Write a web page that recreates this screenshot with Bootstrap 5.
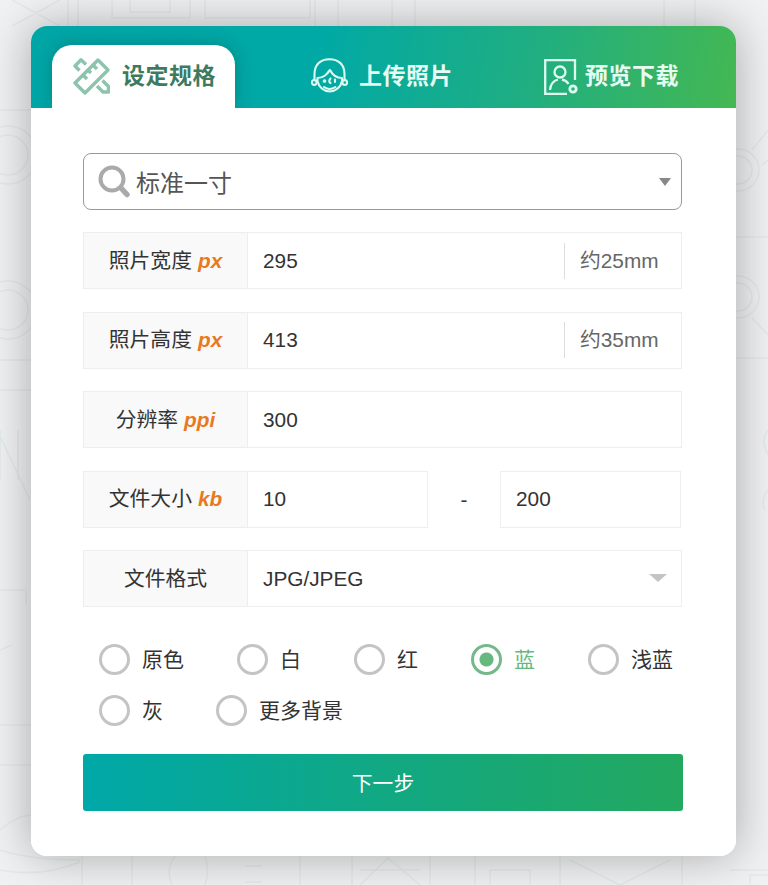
<!DOCTYPE html>
<html lang="zh-CN">
<head>
<meta charset="utf-8">
<title>设定规格</title>
<link rel="stylesheet" href="https://cdn.jsdelivr.net/npm/bootstrap@5.3.0/dist/css/bootstrap.min.css">
<style>
html,body{height:885px;overflow:hidden}
body{background:#f0f1f2;font-family:"Liberation Sans","Noto Sans CJK SC",sans-serif;color:#333;position:relative;padding:26px 32px 0 31px}
.deco{position:absolute;left:0;top:0;width:768px;height:885px}
.deco *{fill:none;stroke:#e4e9e9;stroke-width:1.6}
.sheet{position:relative;width:705px;height:830px;border:0;border-radius:16px;overflow:hidden;background:#fff}
.sheet-wrap{position:relative;width:705px;height:830px;border-radius:16px;box-shadow:0 0 45px rgba(0,0,0,.3)}
.tabbar{height:82px;padding-left:21px;background:linear-gradient(100deg,#00a6a6 0%,#00a9a6 40%,#1fae82 70%,#44b852 100%);flex-wrap:nowrap}
.tabitem{display:flex;align-items:center;color:#fff;font-size:23px;letter-spacing:.5px;font-weight:700;height:63px;line-height:1;padding:0;white-space:nowrap}
.tabitem:hover,.tabitem:focus{color:#fff}
.tabitem.on{width:183px;padding-left:21px;background:#fff;color:#3e7a5e;border-radius:20px 20px 0 0;box-shadow:0 0 18px rgba(0,60,60,.3);gap:12px}
.tab2{margin-left:76px;gap:11px;color:#e6fbf2}
.tab3{margin-left:91px;gap:7px;color:#e6fbf2}
.tabitem.on:hover,.tabitem.on:focus{color:#3e7a5e}
.formbox{position:relative;background:#fff;padding:45px 53px 45px 52px}
.stack{display:flex;flex-direction:column;gap:22.5px;margin-right:1px}
.pickwrap{position:relative}
.pickmain{height:57px;margin-bottom:-.5px;border:1px solid #999;border-radius:8px;padding:4px 40px 0 52px;font-size:24px;color:#555;background-image:none;box-shadow:none}
.lens{position:absolute;left:15px;top:12px;width:32px;height:33px;pointer-events:none}
.tri{position:absolute;border-style:solid;border-color:#888 transparent transparent;pointer-events:none}
.tri-a{right:11px;top:25px;border-width:8px 6px 0}
.tri-b{right:15px;top:24px;border-width:8px 9px 0;border-top-color:#c4c4c4}
.fld{height:57px;flex-wrap:nowrap}
.fld .input-group-text,.fld .form-control,.fld .form-select{border-color:#eee;border-radius:0;font-size:20.8px;height:57px;color:#333;box-shadow:none}
.fld .cap{width:165px;flex:none;justify-content:center;background:#f9f9f9;padding:0;gap:0}
.fld .form-control,.fld .form-select{padding:0 15px}
.fld .form-select{background-image:none}
.fld .unit{font-weight:700;font-style:italic;color:#e87a1e;margin-left:6px}
.fld .openend{border-right:0}
.fld .tail{position:relative;z-index:6;background:#fff;padding:0 22px 0 0;color:#666;width:118px;flex:none;border-left:0}
.tailin{display:flex;align-items:center;height:36px;border-left:1px solid #ddd;padding-left:15px;white-space:nowrap}
.fld .dash{width:72px;flex:none;text-align:center;font-size:20.8px;line-height:57px;margin-left:0!important}
.fld .sizebox{flex:0 0 181px;width:181px;min-width:0}
.fld .dash + .sizebox{margin-left:0!important}
.colors{display:flex;flex-wrap:wrap;gap:20px 53px;padding:37px 0 0 16px}
.dot{display:flex;align-items:center;gap:12px;font-size:21px;line-height:31px;margin:0;padding:0;min-height:0;color:#333}
.dot .form-check-input{width:31px;height:31px;margin:0;float:none;border:3px solid #c4c4c4;background:#fff;box-shadow:none;flex:none}
.dot .form-check-input:checked[type=radio]{background:radial-gradient(circle,#66b87e 0,#66b87e 6.500px,#fff 7.500px);border-color:#74b98a}
.dot.sel{color:#66b87e}
.nextbtn{display:block;width:600px;height:57px;margin-top:27.5px;padding:3px 0 0;border:0;border-radius:3px;color:#fff;font-size:20.8px;background:linear-gradient(90deg,#00a8a8,#23a85f)}
.nextbtn:hover{color:#fff;background:linear-gradient(90deg,#00a8a8,#23a85f)}
</style>
</head>
<body>
<svg class="deco" viewBox="0 0 768 885" aria-hidden="true">
  <circle cx="8" cy="155" r="20"/><circle cx="8" cy="155" r="29"/>
  <circle cx="8" cy="310" r="20"/><circle cx="8" cy="310" r="29"/>
  <path d="M0 110H32M0 360H32M0 390H32M0 430V480M18 430V480M0 436L30 500M0 590H26V605M0 650L12 645M0 725H32M0 765H32M0 830Q18 815 32 815M0 850Q30 860 80 860M0 870Q40 878 80 862"/>
  <circle cx="738" cy="170" r="14"/><circle cx="738" cy="170" r="21"/>
  <circle cx="738" cy="297" r="14"/><circle cx="738" cy="297" r="21"/>
  <path d="M752 150L768 130M762 165L768 160M752 318L768 335M736 237H768M736 358H768M768 430Q760 440 768 455M768 490Q760 500 765 510"/>
  <path d="M68 0V26M78 0V26M112 0V18H190V0M130 0V12H170V0M205 0V18H310V0M315 0V26M338 0V26M392 0V26M415 0V26M664 0V26M695 0V26M12 0L60 26M60 0L12 26"/>
  <path d="M82 856V885M132 856V885M175 856Q165 870 172 885M205 856Q210 870 205 885M245 866H262M245 882H262M300 856V885M352 856V885M360 885L388 858L420 885M360 870H420M430 856V885M475 856V885M490 885V870H530V885M570 860L620 885L670 860M560 856V885M682 856V885M730 870H768M750 885V875H768"/>
</svg>
<div class="sheet-wrap">
<div class="card sheet">
  <nav class="nav tabbar align-items-end">
    <a class="nav-link tabitem on" href="#">
      <svg width="37" height="37" viewBox="0 0 37 37" fill="none" stroke="#8cc4ad" stroke-width="3.4" stroke-linejoin="round">
        <path d="M2 25L25 2L35 12L12 35Z"/>
        <path d="M10 17l4 4M15 12l3 3M20 7l4 4"/>
        <path d="M13 6.500L8 1.800L2 8L6.500 12.500"/>
        <path d="M24 28l6 6h5.500v-5.500l-6-6"/>
      </svg>
      设定规格
    </a>
    <a class="nav-link tabitem tab2" href="#">
      <svg width="37" height="37" viewBox="0 0 37 37" fill="none" stroke="#dcfbf0" stroke-width="2.1" stroke-linecap="round" stroke-linejoin="round">
        <path d="M3.500 21V16C3.500 6 10 1.200 18.500 1.200C27 1.200 33.500 6 33.500 16V21"/>
        <circle cx="3.200" cy="24.500" r="2.400"/><circle cx="33.800" cy="24.500" r="2.400"/>
        <path d="M6.500 20C13 20 16 16 19 12C21 16 25 20 31 20V23A12.500 13 0 0 1 6.500 23Z"/>
        <circle cx="13.500" cy="23" r=".8"/><path d="M24 21.500v2.500"/><path d="M19.500 20.500Q17 23.500 19.500 25"/>
        <path d="M13 29Q18.500 33 24.500 29"/>
      </svg>
      上传照片
    </a>
    <a class="nav-link tabitem tab3" href="#">
      <svg width="34" height="36" viewBox="0 0 34 36" fill="none" stroke="#dcfbf0" stroke-width="2.300">
        <path d="M31 21V1.200H1.200V34.800H23"/>
        <circle cx="16" cy="13" r="5.500"/>
        <path d="M6 31C6.500 25 10 21.500 14 20.500M18 20.500C20.500 21 23 22.500 24.500 25"/>
        <circle cx="29" cy="30" r="3.200" stroke-width="2.800"/>
      </svg>
      预览下载
    </a>
  </nav>
  <form class="formbox">
    <div class="stack">
      <div class="pickwrap">
        <select class="form-select pickmain" aria-label="规格"><option>标准一寸</option></select>
        <svg class="lens" viewBox="0 0 32 33" fill="none" stroke="#aaa" stroke-width="4"><circle cx="14" cy="14" r="11.500"/><path d="M23 23L29 29.500" stroke-width="5.500" stroke-linecap="round"/></svg>
        <span class="tri tri-a"></span>
      </div>
      <div class="input-group fld">
        <span class="input-group-text cap">照片宽度<span class="unit">px</span></span>
        <input class="form-control openend" value="295" aria-label="照片宽度">
        <span class="input-group-text tail"><span class="tailin">约25mm</span></span>
      </div>
      <div class="input-group fld">
        <span class="input-group-text cap">照片高度<span class="unit">px</span></span>
        <input class="form-control openend" value="413" aria-label="照片高度">
        <span class="input-group-text tail"><span class="tailin">约35mm</span></span>
      </div>
      <div class="input-group fld">
        <span class="input-group-text cap">分辨率<span class="unit">ppi</span></span>
        <input class="form-control" value="300" aria-label="分辨率">
      </div>
      <div class="input-group fld">
        <span class="input-group-text cap">文件大小<span class="unit">kb</span></span>
        <input class="form-control sizebox" value="10" aria-label="最小">
        <span class="dash">-</span>
        <input class="form-control sizebox" value="200" aria-label="最大">
      </div>
      <div class="input-group fld pickwrap">
        <span class="input-group-text cap">文件格式</span>
        <select class="form-select" aria-label="文件格式"><option>JPG/JPEG</option></select>
        <span class="tri tri-b"></span>
      </div>
    </div>
    <div class="colors">
      <label class="form-check dot"><input class="form-check-input" type="radio" name="bg">原色</label>
      <label class="form-check dot"><input class="form-check-input" type="radio" name="bg">白</label>
      <label class="form-check dot"><input class="form-check-input" type="radio" name="bg">红</label>
      <label class="form-check dot sel"><input class="form-check-input" type="radio" name="bg" checked>蓝</label>
      <label class="form-check dot"><input class="form-check-input" type="radio" name="bg">浅蓝</label>
      <label class="form-check dot"><input class="form-check-input" type="radio" name="bg">灰</label>
      <label class="form-check dot"><input class="form-check-input" type="radio" name="bg">更多背景</label>
    </div>
    <button type="button" class="btn nextbtn">下一步</button>
  </form>
</div>
</div>
<script src="https://cdn.jsdelivr.net/npm/bootstrap@5.3.0/dist/js/bootstrap.bundle.min.js"></script>
</body>
</html>
